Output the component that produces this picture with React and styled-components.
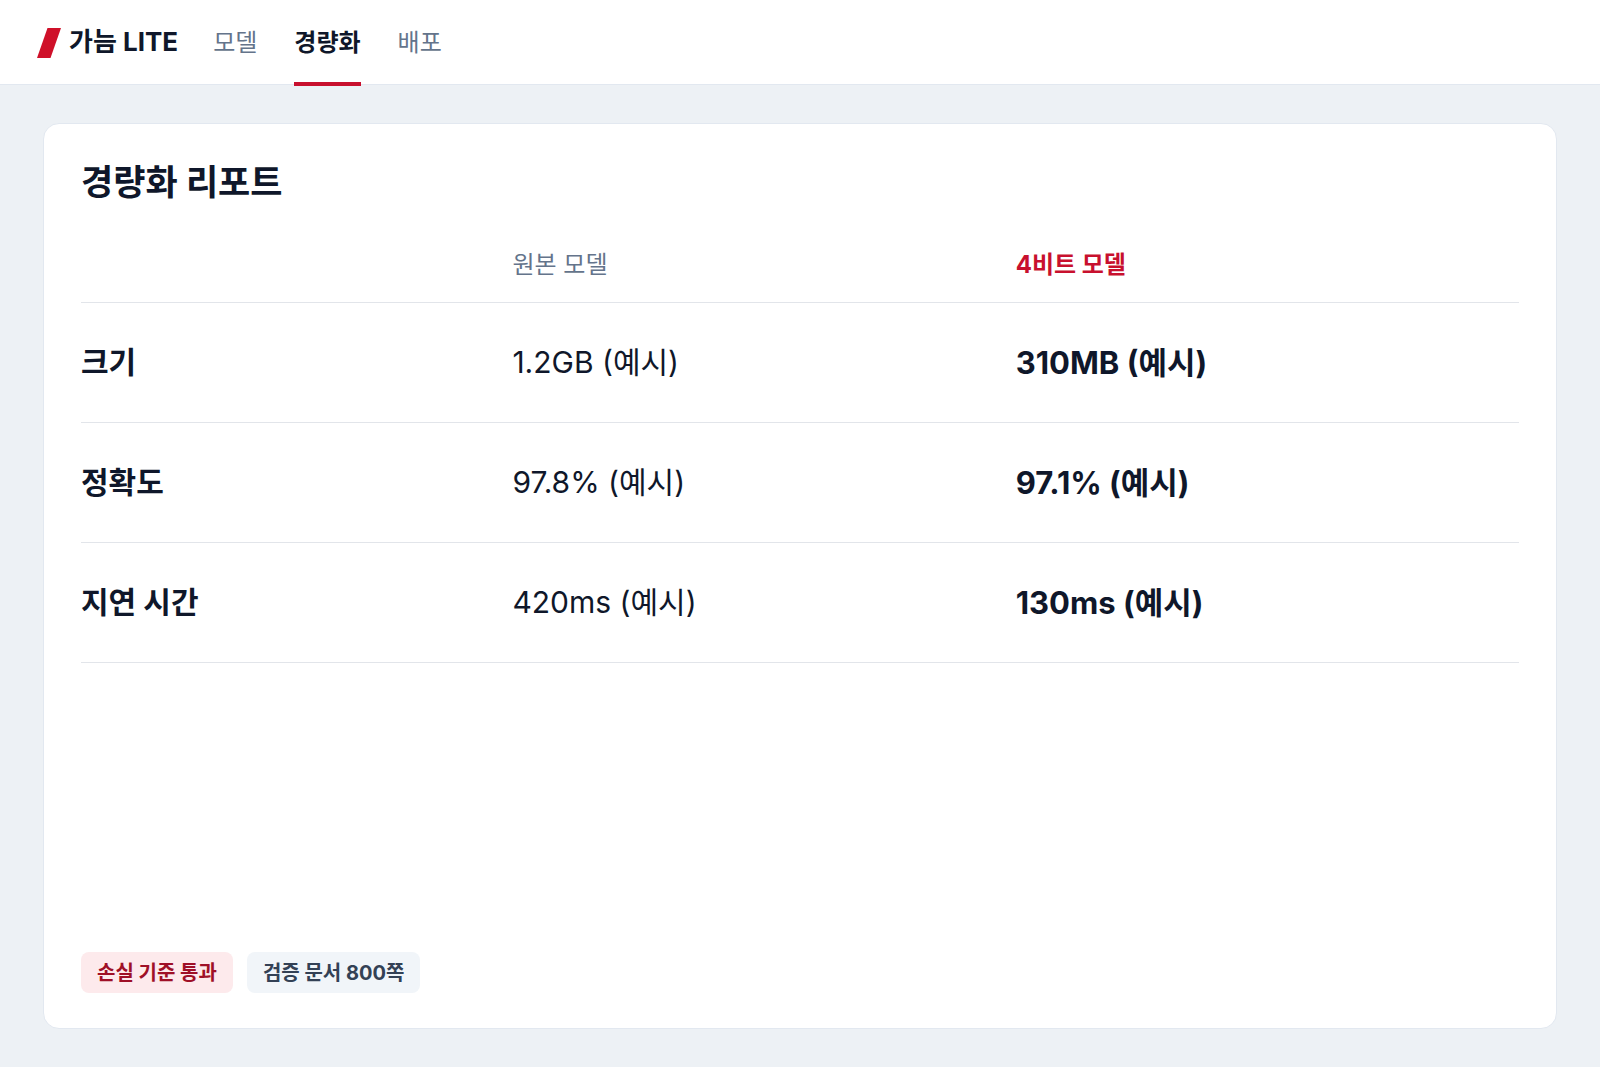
import React from "react";
import styled, { createGlobalStyle } from "styled-components";

const Global = createGlobalStyle`
  *, *::before, *::after { box-sizing: border-box; }
  body {
    margin: 0;
    background: #edf1f5;
    color: #0f172a;
    font-family: Inter, "Noto Sans CJK KR", sans-serif;
  }
`;

const Page = styled.div`
  min-height: 100vh;
  display: flex;
  flex-direction: column;
`;

const TopBar = styled.header`
  height: 85px;
  flex: none;
  display: flex;
  align-items: stretch;
  gap: 35px;
  padding: 0 37px;
  background: #ffffff;
  border-bottom: 1px solid #e2e8f0;
`;

const Brand = styled.a`
  display: flex;
  align-items: center;
  gap: 8px;
  padding-top: 2px;
  color: inherit;
  text-decoration: none;
  font-size: 26px;
  line-height: 32px;
  font-weight: 700;
`;

const BrandName = styled.span`
  padding-bottom: 2px;
`;

const Nav = styled.nav`
  display: flex;
  gap: 37px;
`;

const NavLink = styled.a`
  display: flex;
  align-items: center;
  height: 86px;
  padding-bottom: 2px;
  border-bottom: 4px solid ${(p) => (p.$active ? "#c8102e" : "transparent")};
  color: ${(p) => (p.$active ? "#0f172a" : "#64748b")};
  font-size: 24px;
  font-weight: ${(p) => (p.$active ? 700 : 400)};
  text-decoration: none;
`;

const Main = styled.main`
  flex: 1;
  display: flex;
  padding: 38px 43px;
`;

const Card = styled.section`
  flex: 1;
  display: flex;
  flex-direction: column;
  align-items: flex-start;
  padding: 33px 37px 35px;
  background: #ffffff;
  border: 1px solid #e2e8f0;
  border-radius: 16px;
`;

const Title = styled.h1`
  margin: 0 0 23px;
  font-size: 35px;
  line-height: 50px;
  font-weight: 700;
`;

const Table = styled.table`
  width: 100%;
  table-layout: fixed;
  border-collapse: collapse;
  text-align: left;
`;

const Col = styled.col`
  width: ${(p) => p.$width};
`;

const HeadCell = styled.th`
  height: 72px;
  padding: 0 0 6px;
  border-bottom: 1px solid #e2e5ea;
  color: ${(p) => (p.$accent ? "#c8102e" : "#64748b")};
  font-size: 24px;
  font-weight: ${(p) => (p.$accent ? 700 : 400)};
`;

const RowLabel = styled.th`
  height: 120px;
  padding: 0 0 4px;
  border-bottom: 1px solid #e2e5ea;
  font-size: 30px;
  font-weight: 700;
`;

const Value = styled.td`
  padding: 0 0 4px;
  border-bottom: 1px solid #e2e5ea;
  font-size: ${(p) => (p.$strong ? "31px" : "30px")};
  font-weight: ${(p) => (p.$strong ? 700 : 400)};
`;

const Badges = styled.div`
  display: flex;
  gap: 14px;
  margin-top: auto;
`;

const Badge = styled.span`
  padding: 1px 16px 0;
  border-radius: 8px;
  background: ${(p) => (p.$accent ? "#fdeaec" : "#f1f5f9")};
  color: ${(p) => (p.$accent ? "#9f1027" : "#334155")};
  font-size: 20px;
  line-height: 40px;
  font-weight: 700;
`;

const rows = [
  { label: "크기", original: "1.2GB (예시)", light: "310MB (예시)" },
  { label: "정확도", original: "97.8% (예시)", light: "97.1% (예시)" },
  { label: "지연 시간", original: "420ms (예시)", light: "130ms (예시)" },
];

export default function App() {
  return (
    <Page lang="ko">
      <Global />
      <TopBar>
        <Brand href="#">
          <svg width="24" height="30" viewBox="0 0 24 30" aria-hidden="true">
            <path d="M10.5 0H24L13.5 30H0Z" fill="#cf1029" />
          </svg>
          <BrandName>가늠 LITE</BrandName>
        </Brand>
        <Nav>
          <NavLink href="#models">모델</NavLink>
          <NavLink href="#compress" $active aria-current="page">경량화</NavLink>
          <NavLink href="#deploy">배포</NavLink>
        </Nav>
      </TopBar>
      <Main>
        <Card>
          <Title>경량화 리포트</Title>
          <Table>
            <colgroup>
              <Col $width="30%" />
              <Col $width="35%" />
              <Col $width="35%" />
            </colgroup>
            <thead>
              <tr>
                <HeadCell as="td" />
                <HeadCell scope="col">원본 모델</HeadCell>
                <HeadCell scope="col" $accent>4비트 모델</HeadCell>
              </tr>
            </thead>
            <tbody>
              {rows.map((row) => (
                <tr key={row.label}>
                  <RowLabel scope="row">{row.label}</RowLabel>
                  <Value>{row.original}</Value>
                  <Value $strong>{row.light}</Value>
                </tr>
              ))}
            </tbody>
          </Table>
          <Badges>
            <Badge $accent>손실 기준 통과</Badge>
            <Badge>검증 문서 800쪽</Badge>
          </Badges>
        </Card>
      </Main>
    </Page>
  );
}
